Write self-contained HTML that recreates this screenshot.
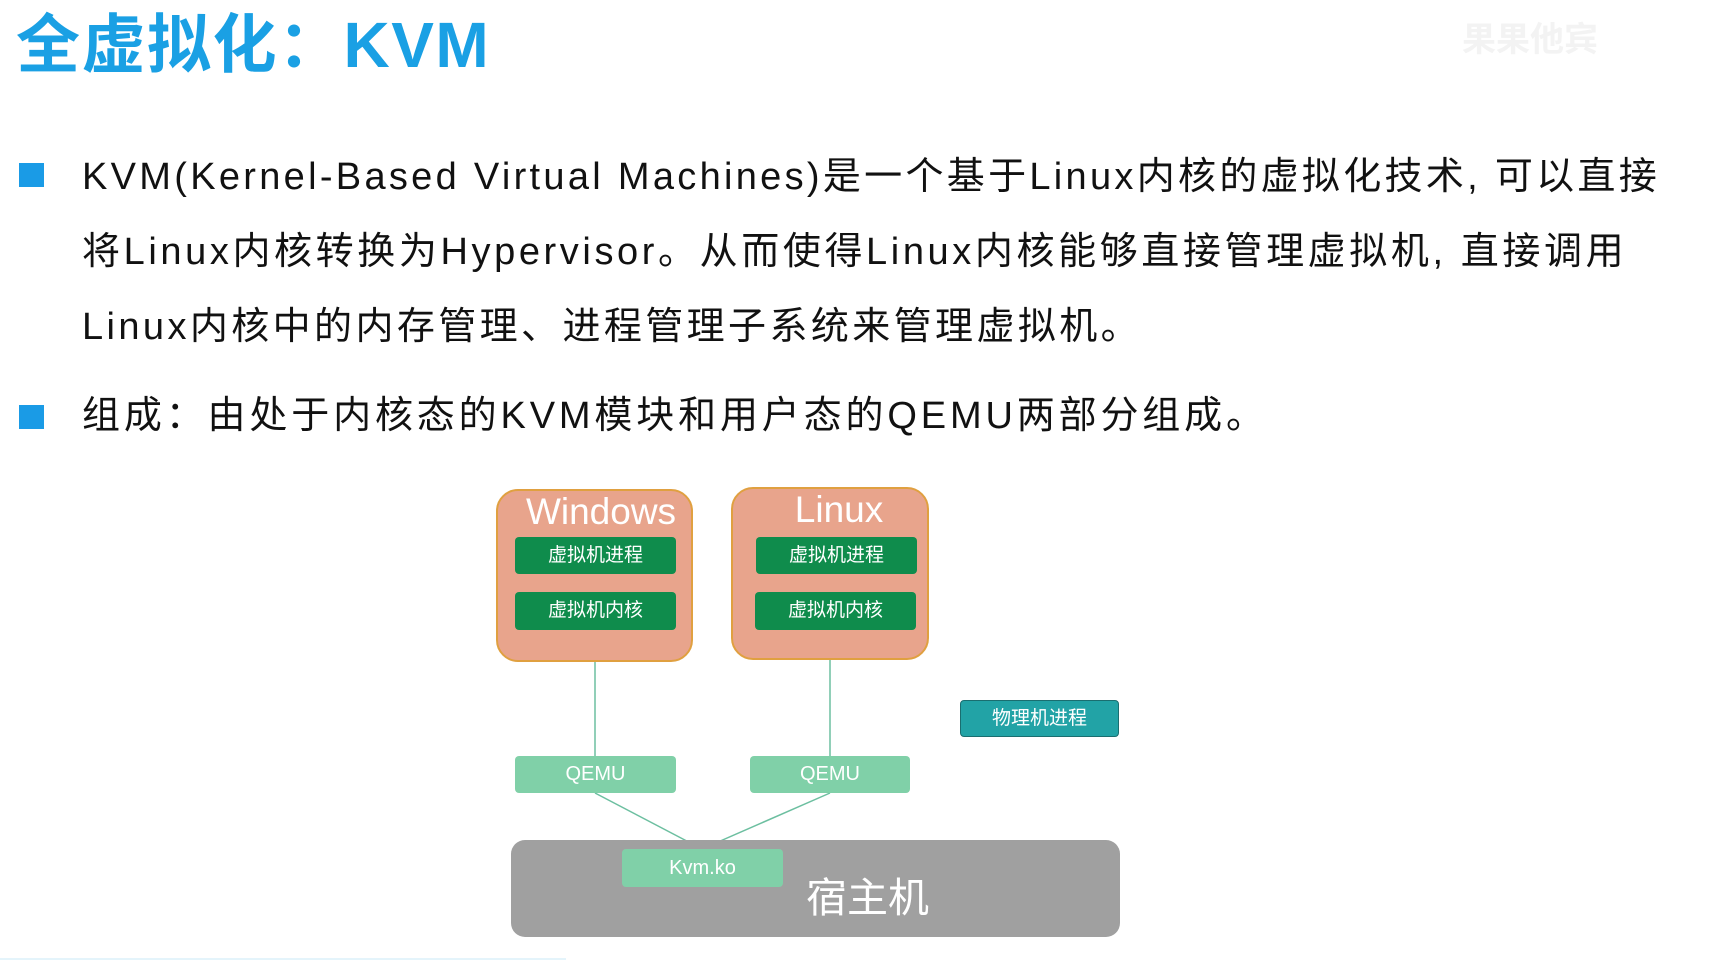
<!DOCTYPE html>
<html><head><meta charset="utf-8"><style>
body{margin:0;width:1717px;height:970px;background:#fff;position:relative;overflow:hidden;font-family:"Liberation Sans","Noto Sans CJK SC",sans-serif;}
.a{position:absolute;white-space:nowrap;}
.t{left:16px;top:-6px;font-size:64px;font-weight:bold;color:#1aa0e4;letter-spacing:1.5px;}
.b{width:25px;height:24px;background:#1a9be6;}
.l{font-size:38px;color:#111;left:82px;line-height:50px;letter-spacing:3.4px;}
.box{position:absolute;background:#e8a48c;border:2px solid #e0a040;border-radius:22px;box-sizing:border-box;}
.g{position:absolute;background:#0f8c4c;color:#fff;border-radius:4px;font-size:19px;text-align:center;}
.q{position:absolute;background:#80d0a8;color:#fff;border-radius:4px;font-size:20px;text-align:center;}
</style></head><body>
<div class="a t">全虚拟化：KVM</div>
<div class="a" style="left:1462px;top:12px;font-size:34px;color:#f3f3f3;font-weight:bold">果果他宾</div>
<div class="a b" style="left:19px;top:163px"></div>
<div class="a b" style="left:19px;top:405px"></div>
<div class="a l" style="top:152px;letter-spacing:3.3px">KVM(Kernel-Based Virtual Machines)是一个基于Linux内核的虚拟化技术, 可以直接</div>
<div class="a l" style="top:227px;letter-spacing:3.6px">将Linux内核转换为Hypervisor。从而使得Linux内核能够直接管理虚拟机, 直接调用</div>
<div class="a l" style="top:302px">Linux内核中的内存管理、进程管理子系统来管理虚拟机。</div>
<div class="a l" style="top:391px;letter-spacing:3.85px">组成：由处于内核态的KVM模块和用户态的QEMU两部分组成。</div>

<svg class="a" style="left:0;top:0" width="1717" height="970">
<line x1="595" y1="662" x2="595" y2="756" stroke="#6cbfa0" stroke-width="1.5"/>
<line x1="830" y1="660" x2="830" y2="756" stroke="#6cbfa0" stroke-width="1.5"/>
<line x1="595" y1="793" x2="702" y2="849" stroke="#6cbfa0" stroke-width="1.5"/>
<line x1="830" y1="793" x2="702" y2="849" stroke="#6cbfa0" stroke-width="1.5"/>
</svg>

<div class="box" style="left:496px;top:489px;width:197px;height:173px"></div>
<div class="a" style="left:496px;top:491px;width:210px;text-align:center;font-size:37px;color:#fff">Windows</div>
<div class="g" style="left:515px;top:537px;width:161px;height:37px;line-height:37px">虚拟机进程</div>
<div class="g" style="left:515px;top:592px;width:161px;height:38px;line-height:38px">虚拟机内核</div>

<div class="box" style="left:731px;top:487px;width:198px;height:173px"></div>
<div class="a" style="left:731px;top:489px;width:216px;text-align:center;font-size:37px;color:#fff">Linux</div>
<div class="g" style="left:756px;top:537px;width:161px;height:37px;line-height:37px">虚拟机进程</div>
<div class="g" style="left:755px;top:592px;width:161px;height:38px;line-height:38px">虚拟机内核</div>

<div class="g" style="left:960px;top:700px;width:157px;height:35px;line-height:35px;background:#22a3a6;border:1px solid #1a6e70">物理机进程</div>

<div class="q" style="left:515px;top:756px;width:161px;height:37px;line-height:37px">QEMU</div>
<div class="q" style="left:750px;top:756px;width:160px;height:37px;line-height:37px">QEMU</div>

<div class="a" style="left:511px;top:840px;width:609px;height:97px;background:#a0a0a0;border-radius:14px"></div>
<div class="q" style="left:622px;top:849px;width:161px;height:38px;line-height:38px">Kvm.ko</div>
<div class="a" style="left:806px;top:864px;font-size:41px;color:#fff">宿主机</div>
<div class="a" style="left:0;top:958px;width:566px;height:2px;background:#e4f4fb"></div>
</body></html>
